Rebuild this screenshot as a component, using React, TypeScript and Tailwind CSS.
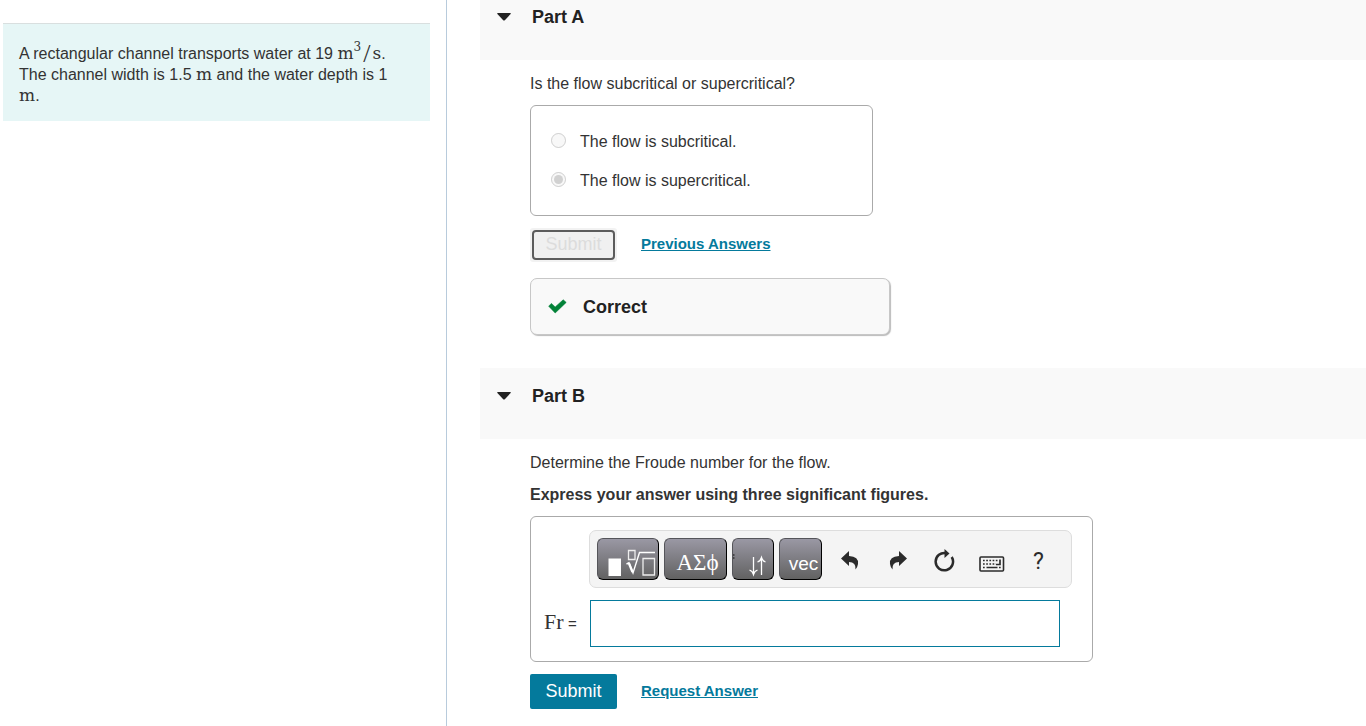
import type { ReactNode } from "react";

function Unit({ children }: { children: ReactNode }) {
  return (
    <span className="font-['DejaVu_Serif',serif] text-[17px] leading-none">
      {children}
    </span>
  );
}

function PartHeader({ title, className }: { title: string; className: string }) {
  return (
    <header className={`bg-[#f9f9f9] ${className}`}>
      <button type="button" className="flex items-center pl-[17px] text-[#222]">
        <svg width="14" height="8" viewBox="0 0 14 8" aria-hidden="true" className="mr-[21px]">
          <path d="M.8 0h12.4q1 .2.4 1L7.8 7.2q-.8.8-1.6 0L.4 1Q-.2.2.8 0z" fill="#222" />
        </svg>
        <h2 className="text-[18px] leading-6 font-bold">{title}</h2>
      </button>
    </header>
  );
}

const links = "pb-[2px] text-[15px] leading-5 font-bold text-[#047a9c] underline";
const mathButton =
  "flex h-[42px] items-end justify-center rounded-[6px] border border-black border-t-[#55555a] border-l-[#55555a] bg-linear-to-b from-[#9a98a4] to-[#626262] text-white overflow-hidden";
const toolButton = "flex h-[42px] w-[47px] items-center justify-center text-[#2b2b2b]";

function PartA() {
  return (
    <section>
      <PartHeader title="Part A" className="h-[60px] pt-[5px]" />
      <form className="pt-3 pl-[50px]">
        <p className="leading-6">Is the flow subcritical or supercritical?</p>
        <fieldset className="mt-[9px] flex h-[111px] w-[343px] flex-col gap-[15px] rounded-[6px] border border-[#aaa] pt-6 pl-5">
          <label className="flex h-6 items-center gap-[14px]">
            <input type="radio" name="flow" disabled className="mb-1 size-[15px]" />
            The flow is subcritical.
          </label>
          <label className="flex h-6 items-center gap-[14px]">
            <input type="radio" name="flow" disabled defaultChecked className="mb-1 size-[15px]" />
            The flow is supercritical.
          </label>
        </fieldset>
        <div className="mt-[12px] flex items-center gap-6">
          <span className="rounded-[3px] bg-[#f2f2f2] p-[2px]">
            <button
              type="submit"
              disabled
              className="block h-[30px] w-[83px] rounded-[4px] border-2 border-[#5c5c5c] bg-[#f0f0f0] pb-[2px] text-[18px] leading-6 text-[#dcdcdc]"
            >
              Submit
            </button>
          </span>
          <a href="#previous" className={links}>
            Previous Answers
          </a>
        </div>
        <div className="mt-4 flex h-[57px] w-[360px] items-center rounded-[7px] border border-[#c7c7c7] bg-[#f9f9f9] pl-[17px] shadow-[1px_1px_1px_#bbb]">
          <svg width="19" height="16" viewBox="0 0 19 16" aria-hidden="true" className="mr-4">
            <path d="M.7 7.200 3.400 4.400 7.200 8 15.200.8 18.200 3.400 7.200 14z" fill="#038238" stroke="#038238" strokeWidth=".6" strokeLinejoin="round" />
          </svg>
          <strong className="text-[18px] leading-6 text-[#222]">Correct</strong>
        </div>
      </form>
    </section>
  );
}

function Toolbar() {
  return (
    <div className="flex h-[58px] w-[483px] items-start gap-[5px] rounded-[7px] border border-[#ddd] bg-[#f4f4f4] pt-[7px] pl-[7px]">
      <button type="button" aria-label="Templates" className={`${mathButton} w-[62px]`}>
        <svg width="60" height="40" viewBox="0 0 60 40" aria-hidden="true" fill="none">
          <path d="M10.500 19.500h12.500v17.500H10.500z" fill="#fff" />
          <path d="M30.500 11.500h6.500v9h-6.500z" stroke="#eee" strokeWidth="1.300" />
          <path d="M45 19.500h11.500v16.500H45z" stroke="#eee" strokeWidth="1.300" />
          <path d="M28.500 25l2.500-1.200L35 34l6.500-20.500H57" stroke="#fff" strokeWidth="1.400" />
          <path d="M31 24.500l3.500 8.500" stroke="#fff" strokeWidth="2.300" />
        </svg>
      </button>
      <button type="button" className={`${mathButton} w-[63px] pl-1 font-['Liberation_Serif',serif] text-[23px] leading-[33px]`}>
        ΑΣϕ
      </button>
      <button type="button" aria-label="Arrows" className={`${mathButton} w-[42px]`}>
        <svg width="40" height="40" viewBox="0 0 40 40" aria-hidden="true" fill="none" stroke="#fff" strokeWidth="1.300">
          <path d="M20.500 18v17.500M16.500 31q3 1 4 4.500 1-3.500 4-4.500M28.500 36V19M24.500 23q3-1 4-4.500 1 3.500 4 4.500" />
          <path d="M0 16h1.500M0 19h1.500" stroke="#333" />
        </svg>
      </button>
      <button type="button" className={`${mathButton} w-[43px] pl-[6px] text-[19px] leading-[31px]`}>
        vec
      </button>
      <div className="flex pt-px">
        <button type="button" aria-label="Undo" className={toolButton}>
          <svg width="22" height="22" viewBox="0 0 22 22" aria-hidden="true">
            <path d="M1 9.500 9 2V7Q19 7.500 18 15q-.4 3-2.500 5.500 .7-7.500-6.500-7.500V17z" fill="currentColor" />
          </svg>
        </button>
        <button type="button" aria-label="Redo" className={toolButton}>
          <svg width="20" height="22" viewBox="0 0 20 22" aria-hidden="true">
            <path d="M19 9.500 11 2V7Q1 7.500 2 15q.4 3 2.500 5.500-.7-7.500 6.500-7.500V17z" fill="currentColor" />
          </svg>
        </button>
        <button type="button" aria-label="Reset" className={toolButton}>
          <svg width="22" height="24" viewBox="0 0 22 24" aria-hidden="true">
            <path d="M12.500 5.200A8.700 8.700 0 1 0 17.700 9" fill="none" stroke="currentColor" strokeWidth="2.500" />
            <path d="M10.500 1 15.500 5.500l-5 4.500z" fill="currentColor" />
          </svg>
        </button>
        <button type="button" aria-label="Keyboard" className={`${toolButton} pt-2`}>
          <svg width="26" height="16" viewBox="0 0 26 16" aria-hidden="true" fill="none" stroke="currentColor">
            <rect x="1" y="1" width="23.500" height="14" rx="1" strokeWidth="1.600" />
            <path d="M4 4.500h15M4 8h13M4 11.500h2M20 11.500h2" strokeWidth="1.700" strokeDasharray="1.700 1.500" />
            <path d="M7.500 11.500h11M17 8.500h4V3.500" strokeWidth="1.700" />
          </svg>
        </button>
        <button type="button" aria-label="Help" className={`${toolButton} pt-1 font-[Roboto,sans-serif] text-[23px]`}>
          ?
        </button>
      </div>
    </div>
  );
}

function PartB() {
  return (
    <section className="mt-[33px]">
      <PartHeader title="Part B" className="h-[71px] pt-4" />
      <form className="pt-3 pl-[50px]">
        <p className="leading-6">Determine the Froude number for the flow.</p>
        <p className="mt-2 leading-6 font-bold">Express your answer using three significant figures.</p>
        <div className="mt-[9px] flex h-[146px] w-[563px] flex-col gap-3 rounded-[6px] border border-[#aaa] pt-[13px]">
          <div className="pl-[58px]">
            <Toolbar />
          </div>
          <div className="flex items-center">
            <label htmlFor="froude" className="w-[59px] pb-[2px] pl-[13px] leading-6 whitespace-nowrap">
              <span className="font-['Liberation_Serif',serif] text-[22px]">Fr</span>{" "}
              <span className="text-[15px]">=</span>
            </label>
            <input id="froude" type="text" className="h-[47px] w-[470px] border border-[#047a9c] bg-white px-2 outline-none" />
          </div>
        </div>
        <div className="mt-3 flex items-center gap-6">
          <button type="submit" className="h-[35px] w-[87px] rounded-[2px] bg-[#047a9c] pb-[2px] text-[18px] leading-6 text-white">
            Submit
          </button>
          <a href="#request" className={links}>
            Request Answer
          </a>
        </div>
      </form>
    </section>
  );
}

export default function App() {
  return (
    <div className="flex min-h-screen bg-white font-['Liberation_Sans',Arial,sans-serif] text-[16px] text-[#333]">
      <aside className="w-[447px] shrink-0 border-r border-[#b8cbdc] pt-[23px] pr-4 pl-[3px]">
        <p className="border-t border-[#d9dfdf] bg-[#e6f6f6] pt-[19px] pr-8 pb-[15px] pl-4 leading-[21px]">
          A rectangular channel transports water at 19{" "}
          <Unit>
            m<sup className="-top-2 text-[12px] leading-none">3</sup>
          </Unit>
          <span className="px-[2px] align-[-3px] font-['Liberation_Serif',serif] text-[26px] leading-[0px]">/</span>
          <Unit>s</Unit>. The channel width is 1.5 <Unit>m</Unit> and the water depth is 1{" "}
          <Unit>m</Unit>.
        </p>
      </aside>
      <main className="min-w-0 flex-1 pl-[33px]">
        <PartA />
        <PartB />
      </main>
    </div>
  );
}
